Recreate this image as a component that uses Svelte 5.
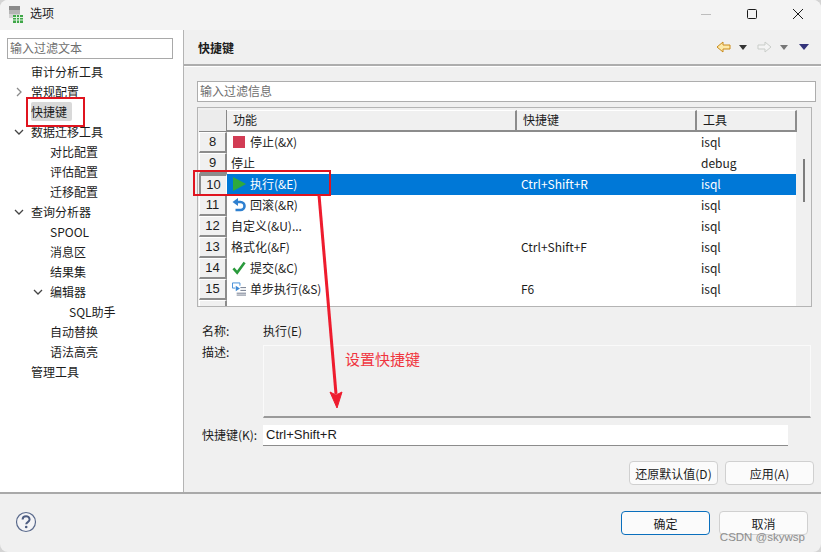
<script lang="ts">
  const tree = [
    { label: '审计分析工具', depth: 1 },
    { label: '常规配置', depth: 1, arrow: 'right' },
    { label: '快捷键', depth: 1, selected: true },
    { label: '数据迁移工具', depth: 1, arrow: 'down' },
    { label: '对比配置', depth: 2 },
    { label: '评估配置', depth: 2 },
    { label: '迁移配置', depth: 2 },
    { label: '查询分析器', depth: 1, arrow: 'down' },
    { label: 'SPOOL', depth: 2 },
    { label: '消息区', depth: 2 },
    { label: '结果集', depth: 2 },
    { label: '编辑器', depth: 2, arrow: 'down' },
    { label: 'SQL助手', depth: 3 },
    { label: '自动替换', depth: 2 },
    { label: '语法高亮', depth: 2 },
    { label: '管理工具', depth: 1 }
  ];

  const rows = [
    { n: 8, icon: 'stop', name: '停止(&X)', key: '', tool: 'isql' },
    { n: 9, icon: '', name: '停止', key: '', tool: 'debug' },
    { n: 10, icon: 'run', name: '执行(&E)', key: 'Ctrl+Shift+R', tool: 'isql', active: true },
    { n: 11, icon: 'undo', name: '回滚(&R)', key: '', tool: 'isql' },
    { n: 12, icon: '', name: '自定义(&U)...', key: '', tool: 'isql' },
    { n: 13, icon: '', name: '格式化(&F)', key: 'Ctrl+Shift+F', tool: 'isql' },
    { n: 14, icon: 'check', name: '提交(&C)', key: '', tool: 'isql' },
    { n: 15, icon: 'step', name: '单步执行(&S)', key: 'F6', tool: 'isql' }
  ];
</script>

<div class="window">
  <header class="titlebar">
    <svg class="app-icon" width="14" height="18" viewBox="0 0 14 18">
      <rect x="0" y="0" width="11" height="4" fill="#8a8a8a" />
      <rect x="0" y="4" width="11" height="4" fill="#b4b4b4" />
      <rect x="0" y="8" width="11" height="4" fill="#d2d2d2" />
      <rect x="4" y="9" width="10" height="8" fill="#3fa648" />
      <path d="M4 11.5h10M4 14h10M7.5 9v8M10.5 9v8" stroke="#dff2df" stroke-width="1" />
    </svg>
    <span class="title">选项</span>
    <div class="winctl">
      <svg width="12" height="12" viewBox="0 0 12 12"><path d="M1 6.5h10" stroke="#bdbdbd" /></svg>
      <svg width="12" height="12" viewBox="0 0 12 12"><rect x="1.5" y="1.5" width="9" height="9" rx="1" fill="none" stroke="#1a1a1a" /></svg>
      <svg width="12" height="12" viewBox="0 0 12 12"><path d="M1 1l10 10M11 1L1 11" stroke="#1a1a1a" /></svg>
    </div>
  </header>

  <div class="body">
    <aside class="sidebar">
      <div class="tree-filter">输入过滤文本</div>
      <ul class="tree">
        {#each tree as item}
          <li class="d{item.depth}">
            {#if item.arrow === 'right'}
              <svg class="arrow" width="10" height="10" viewBox="0 0 10 10"><path d="M3 1l4 4-4 4" fill="none" stroke="#8a8a8a" stroke-width="1.3" /></svg>
            {:else if item.arrow === 'down'}
              <svg class="arrow" width="10" height="10" viewBox="0 0 10 10"><path d="M1 3l4 4 4-4" fill="none" stroke="#444" stroke-width="1.3" /></svg>
            {/if}
            <span class:selected={item.selected}>{item.label}</span>
          </li>
        {/each}
      </ul>
    </aside>

    <main class="content">
      <div class="heading">
        <h1>快捷键</h1>
        <div class="nav">
          <svg width="15" height="12" viewBox="0 0 15 12"><path d="M1 6l6-5v3h7v4H7v3z" fill="#fde9a8" stroke="#c98a1b" /></svg>
          <i class="tri dark"></i>
          <svg class="fwd" width="15" height="12" viewBox="0 0 15 12"><path d="M14 6L8 1v3H1v4h7v3z" fill="#f4f4f4" stroke="#c9cdc9" /></svg>
          <i class="tri grey"></i>
          <i class="tri navy"></i>
        </div>
      </div>

      <div class="pane">
        <div class="filter">输入过滤信息</div>

        <div class="table">
          <div class="thead">
            <div class="corner"></div>
            <div class="th c1">功能</div>
            <div class="th c2">快捷键</div>
            <div class="th c3">工具</div>
          </div>
          <div class="tbody">
            {#each rows as row}
              <div class="row" class:active={row.active}>
                <div class="num">{row.n}</div>
                <div class="cell c1">
                  {#if row.icon === 'stop'}
                    <svg width="14" height="14" viewBox="0 0 14 14"><rect x="1" y="1" width="12" height="12" fill="#d23c54" /></svg>
                  {:else if row.icon === 'run'}
                    <svg width="14" height="14" viewBox="0 0 14 14"><path d="M1 0l13 7-13 7z" fill="#2eaa3e" /></svg>
                  {:else if row.icon === 'undo'}
                    <svg width="14" height="14" viewBox="0 0 14 14"><path d="M5 4h3.5a4 4 0 0 1 0 8H3.5" fill="none" stroke="#2f80d0" stroke-width="2.6" /><path d="M6 0v8L0.5 4z" fill="#2f80d0" /></svg>
                  {:else if row.icon === 'check'}
                    <svg width="14" height="14" viewBox="0 0 15 14"><path d="M1.5 7.5l4 4.5 8-11" fill="none" stroke="#2a9a3c" stroke-width="2.8" /></svg>
                  {:else if row.icon === 'step'}
                    <svg width="14" height="14" viewBox="0 0 15 14"><path d="M.5 6V.5h8v3M.5 6h3" fill="none" stroke="#3d8ad6" /><path d="M4 3.5L8.5 6.5 4 9.5z" fill="#3d8ad6" /><path d="M9 5.5h6M9 8.5h6M5 11.5h10M5 13.5h10" stroke="#6a7488" /></svg>
                  {/if}
                  <span>{row.name}</span>
                </div>
                <div class="cell c2">{row.key}</div>
                <div class="cell c3">{row.tool}</div>
              </div>
            {/each}
            <div class="row stub"><div class="num"></div></div>
            <div class="scrollbar"><div class="thumb"></div></div>
          </div>
        </div>

        <div class="details">
          <div class="label">名称:</div>
          <div class="value">执行(E)</div>
          <div class="label desc-label">描述:</div>
          <div class="desc"></div>
          <div class="label key-label">快捷键(K):</div>
          <div class="key-input">Ctrl+Shift+R</div>
        </div>

        <div class="pane-actions">
          <button>还原默认值(D)</button>
          <button>应用(A)</button>
        </div>
      </div>
    </main>
  </div>

  <footer class="footer">
    <svg class="help" width="22" height="22" viewBox="0 0 22 22">
      <circle cx="11" cy="11" r="9.5" fill="#f4f4f6" stroke="#5a6a8c" stroke-width="1.2" />
      <path d="M7.6 8.6c0-4.4 7-4.4 7 0 0 2.6-3.4 2.4-3.4 4.6" fill="none" stroke="#4d5c80" stroke-width="2" />
      <circle cx="11.2" cy="16" r="1.3" fill="#4d5c80" />
    </svg>
    <div class="footer-actions">
      <button class="primary">确定</button>
      <button>取消</button>
    </div>
  </footer>

  <!-- annotations drawn over the screenshot -->
  <div class="mark mark-tree"></div>
  <div class="mark mark-row"></div>
  <svg class="pointer" width="40" height="220" viewBox="0 0 40 220">
    <path d="M3 1L20 200" stroke="#ee1c2e" stroke-width="3" />
    <path d="M14 198l6 3 6-3-5 16z" fill="#ee1c2e" stroke="#ee1c2e" />
  </svg>
  <div class="note">设置快捷键</div>
  <div class="watermark">CSDN @skywsp</div>
</div>

<style>
  :global(body) {
    margin: 0;
    background: #d4d4d4;
  }

  .window {
    position: relative;
    width: 821px;
    height: 552px;
    overflow: hidden;
    display: flex;
    flex-direction: column;
    background: #f0f0f0;
    border-radius: 8px;
    font-family: 'Noto Sans CJK SC', 'Liberation Sans', sans-serif;
    font-size: 12px;
    color: #1c1c1c;
  }

  .titlebar {
    height: 30px;
    flex: none;
    box-sizing: border-box;
    display: flex;
    align-items: center;
    padding: 0 0 3px 9px;
    background: #f3f3f3;
  }

  .app-icon {
    margin: 3px 7px 0 0;
  }

  .title {
    margin-top: -2px;
    font-size: 12px;
  }

  .winctl {
    margin-left: auto;
    display: flex;
    gap: 34px;
    padding-right: 17px;
  }

  .body {
    flex: 1;
    min-height: 0;
    display: flex;
    border-bottom: 2px solid #a9a9a9;
  }

  .sidebar {
    width: 184px;
    flex: none;
    box-sizing: border-box;
    padding: 8px 10px 0 7px;
    background: #fff;
    border-right: 1px solid #b4b4b4;
  }

  .tree-filter {
    box-sizing: border-box;
    height: 21px;
    line-height: 18px;
    padding-left: 2px;
    border: 1px solid #a9a9a9;
    color: #6e6e6e;
    background: #fff;
  }

  .tree {
    list-style: none;
    margin: 3px 0 0;
    padding: 0;
  }

  .tree li {
    position: relative;
    height: 20px;
    line-height: 20px;
    white-space: nowrap;
  }

  .tree .d1 {
    padding-left: 24px;
  }

  .tree .d2 {
    padding-left: 43px;
  }

  .tree .d3 {
    padding-left: 62px;
  }

  .arrow {
    position: absolute;
    top: 5px;
    margin-left: -17px;
  }

  .selected {
    display: inline-block;
    padding-right: 5px;
    background: #d9d9d9;
    border-radius: 2px;
    line-height: 19px;
  }

  .content {
    flex: 1;
    min-width: 0;
    display: flex;
    flex-direction: column;
  }

  .heading {
    height: 36px;
    flex: none;
    box-sizing: border-box;
    display: flex;
    align-items: center;
    justify-content: space-between;
    padding: 0 12px 0 14px;
    border-bottom: 2px solid #adadad;
  }

  h1 {
    margin: 0;
    font-size: 12px;
    font-weight: 700;
  }

  .nav {
    display: flex;
    align-items: center;
    gap: 8px;
  }

  .fwd {
    margin-left: 2px;
  }

  .tri {
    width: 0;
    height: 0;
    border-left: 4px solid transparent;
    border-right: 4px solid transparent;
    border-top: 5px solid #333;
  }

  .tri.grey {
    border-top-color: #777;
  }

  .tri.navy {
    margin-left: 3px;
    border-left-width: 5px;
    border-right-width: 5px;
    border-top: 6px solid #33337a;
  }

  .pane {
    flex: 1;
    min-height: 0;
    display: flex;
    flex-direction: column;
    padding: 14px 5px 0 13px;
    border-top: 1px solid #fff;
  }

  .filter {
    box-sizing: border-box;
    height: 21px;
    line-height: 18px;
    padding-left: 2px;
    border: 1px solid #adadad;
    background: #fff;
    color: #6e6e6e;
  }

  .table {
    box-sizing: border-box;
    width: 615px;
    height: 200px;
    margin-top: 5px;
    padding: 2px 0 0 1px;
    border: 1px solid #b4b4b4;
    background: #f0f0f0;
    display: flex;
    flex-direction: column;
  }

  .thead {
    display: flex;
    height: 22px;
    flex: none;
  }

  .corner {
    box-sizing: border-box;
    width: 28px;
    border-right: 1px solid #888;
    border-bottom: 1px solid #888;
    background: #ececec;
  }

  .th {
    box-sizing: border-box;
    padding-left: 6px;
    line-height: 18px;
    background: #f0f0f0;
    border-top: 1px solid #fff;
    border-right: 2px solid #8c8c8c;
    border-bottom: 2px solid #8c8c8c;
  }

  .th.c1 {
    width: 290px;
  }

  .th.c2 {
    width: 180px;
  }

  .th.c3 {
    width: 100px;
  }

  .tbody {
    position: relative;
    flex: 1;
    min-height: 0;
    overflow: hidden;
    background: linear-gradient(to right, #f0f0f0 28px, #fff 28px);
  }

  .row {
    display: flex;
    height: 21px;
    width: 598px;
    line-height: 21px;
  }

  .row.active {
    background: #0078d7;
    color: #fff;
  }

  .num {
    box-sizing: border-box;
    width: 28px;
    flex: none;
    text-align: center;
    background: #f0f0f0;
    color: #1c1c1c;
    border: 1px solid #fff;
    border-right: 2px solid #8c8c8c;
    border-bottom: 2px solid #8c8c8c;
    line-height: 18px;
    font-family: 'Liberation Sans', sans-serif;
    font-size: 13px;
  }

  .row.active .num {
    border-color: #8c8c8c #fff #fff #8c8c8c;
    border-width: 2px 1px 1px 2px;
  }

  .cell {
    box-sizing: border-box;
    white-space: nowrap;
    padding: 0 0 2px 4px;
    display: flex;
    align-items: center;
  }

  .cell.c1 {
    width: 290px;
  }

  .cell.c1 svg {
    margin: 0 4px 0 1px;
    flex: none;
  }

  .cell.c2 {
    width: 180px;
  }

  .cell.c3 {
    width: 100px;
  }

  .scrollbar {
    position: absolute;
    top: 0;
    right: 0;
    width: 15px;
    height: 100%;
    background: #f0f0f0;
  }

  .thumb {
    position: absolute;
    top: 27px;
    left: 7px;
    width: 2px;
    height: 43px;
    background: #7d7d7d;
  }

  .details {
    display: grid;
    grid-template-columns: 61px 1fr;
    grid-template-rows: 38px 73px 28px;
    margin: 0 0 0 5px;
  }

  .label {
    padding-top: 15px;
    line-height: 18px;
  }

  .desc-label {
    padding-top: 0;
    margin-top: -2px;
  }

  .value {
    padding-top: 15px;
    line-height: 18px;
  }

  .desc {
    box-sizing: border-box;
    width: 548px;
    height: 73px;
    border: 1px solid #fafafa;
    border-bottom: 2px solid #9a9a9a;
  }

  .key-label {
    padding-top: 8px;
  }

  .key-input {
    box-sizing: border-box;
    width: 525px;
    height: 21px;
    margin-top: 7px;
    padding-left: 3px;
    line-height: 19px;
    background: #fff;
    border-bottom: 1px solid #8c8c8c;
    font-family: 'Liberation Sans', sans-serif;
    font-size: 13px;
  }

  .pane-actions {
    display: flex;
    justify-content: flex-end;
    gap: 7px;
    margin: 15px 2px 0 0;
  }

  button {
    box-sizing: border-box;
    width: 89px;
    height: 24px;
    padding: 0;
    font: inherit;
    color: inherit;
    background: #fbfbfb;
    border: 1px solid #d0d0d0;
    border-radius: 4px;
  }

  .footer {
    height: 58px;
    flex: none;
    display: flex;
    align-items: center;
    justify-content: space-between;
    padding: 0 13px 0 15px;
    box-sizing: border-box;
  }

  .help {
    margin-top: -3px;
  }

  .footer-actions {
    display: flex;
    gap: 9px;
  }

  .primary {
    border: 1px solid #0a6fbd;
  }

  .mark {
    position: absolute;
    box-sizing: border-box;
    border: 2.5px solid #e0141f;
    pointer-events: none;
  }

  .mark-tree {
    left: 26px;
    top: 97px;
    width: 59px;
    height: 30px;
  }

  .mark-row {
    left: 193px;
    top: 170px;
    width: 138px;
    height: 26px;
  }

  .pointer {
    position: absolute;
    left: 316px;
    top: 194px;
  }

  .note {
    position: absolute;
    left: 345px;
    top: 349px;
    font-size: 15px;
    line-height: 20px;
    color: #f0353f;
  }

  .watermark {
    position: absolute;
    right: 16px;
    bottom: 9px;
    font-family: 'Liberation Sans', sans-serif;
    font-size: 11.5px;
    color: #8d8d8d;
  }
</style>
